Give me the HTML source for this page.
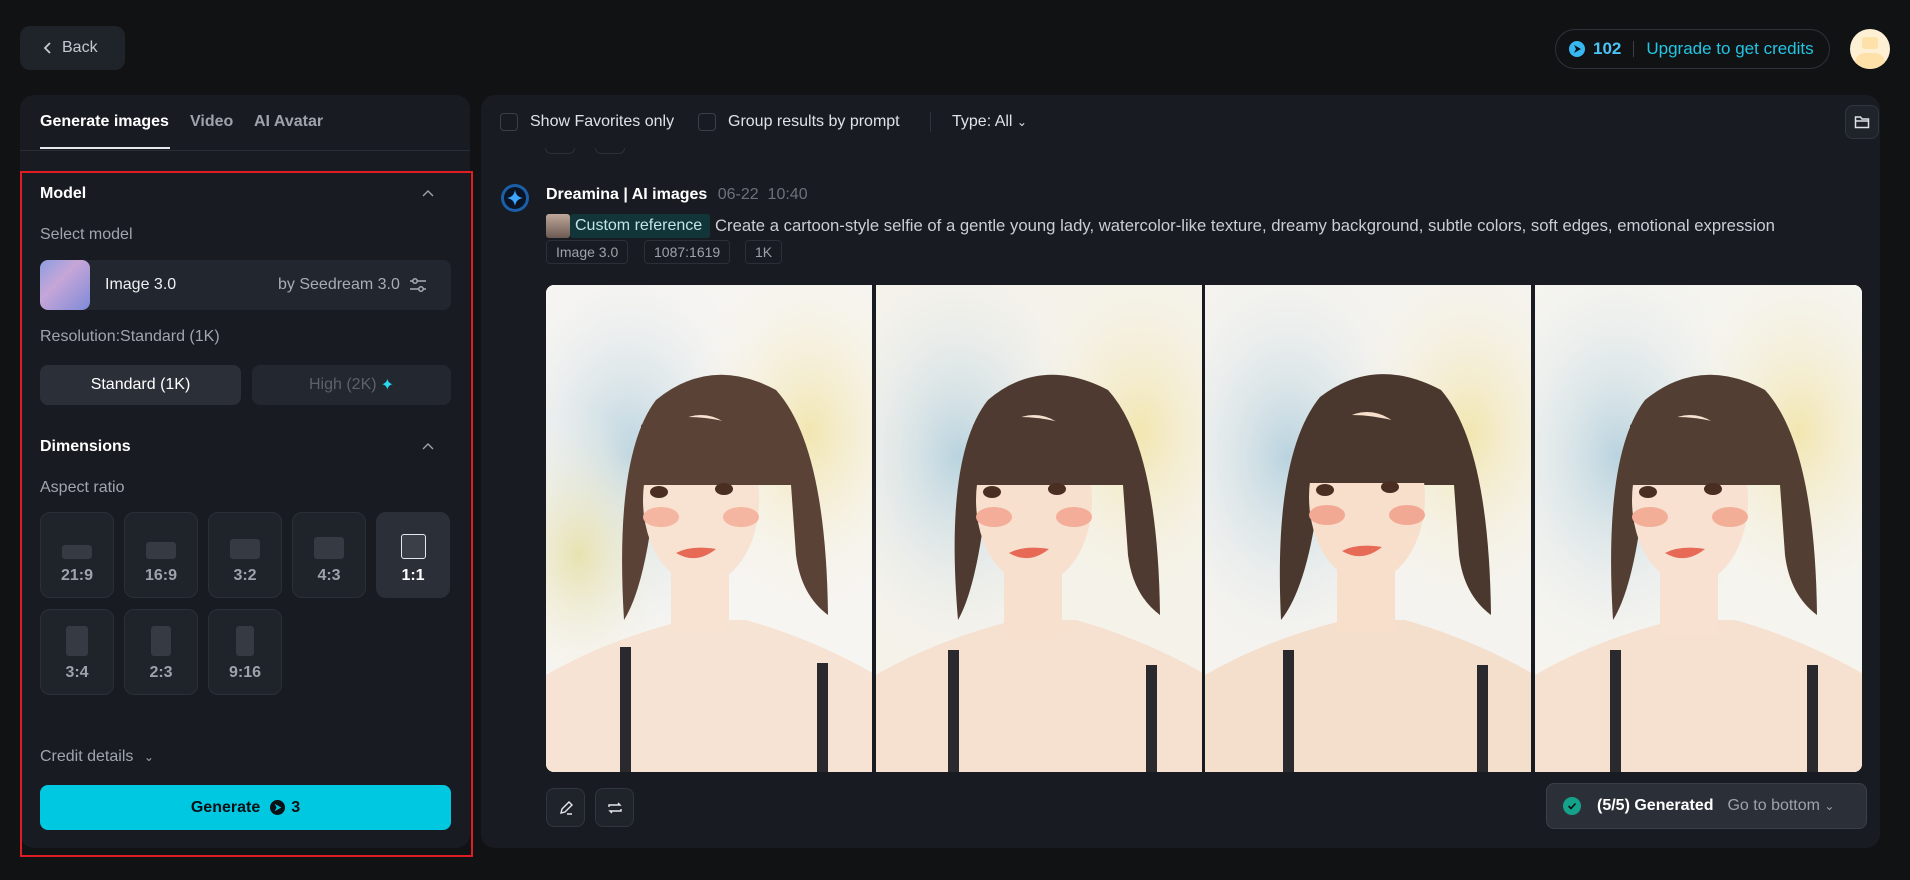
<!DOCTYPE html>
<html><head><meta charset="utf-8"><style>
*{box-sizing:border-box;margin:0;padding:0}
body{width:1910px;height:880px;background:#111214;font-family:"Liberation Sans",sans-serif;position:relative;overflow:hidden;color:#e6e8eb}
.a{position:absolute}
.back{left:20px;top:26px;width:105px;height:44px;border-radius:10px;background:#1f232a;color:#c5c9d0;font-size:16px;display:flex;align-items:center;padding-left:22px}
.lp{left:20px;top:95px;width:450px;height:753px;background:#181b22;border-radius:14px}
.rp{left:481px;top:95px;width:1399px;height:753px;background:#181b22;border-radius:14px}
.red{left:20px;top:171px;width:453px;height:686px;border:2px solid #e01c24}
.t{font-size:16px;white-space:nowrap}
.lbl{color:#a0a5ad;font-size:16px}
.btn{border-radius:8px;background:#2b2f37;display:flex;align-items:center;justify-content:center;font-size:16px}
.tile{width:74px;height:86px;border-radius:10px;background:#1f232a;border:1px solid #2b3038;display:flex;flex-direction:column;align-items:center;justify-content:flex-end;padding-bottom:12px;color:#9ea3ab;font-weight:bold;font-size:16px}
.tile i{display:block;background:#353a43;border-radius:3px;margin-bottom:8px}
.cb{width:18px;height:18px;border:1px solid #3a3f48;border-radius:4px}
.tag{height:24px;border:1px solid #2b3038;border-radius:4px;color:#9ea3ab;font-size:14px;padding:0 9px;display:flex;align-items:center}
.img{top:285px;height:487px;overflow:hidden;background:#f7f5f2}
.sb{width:39px;height:39px;border:1px solid #30353e;border-radius:8px;background:#1f232a;display:flex;align-items:center;justify-content:center}
</style></head><body>
<div class="a back"><svg width="12" height="14" viewBox="0 0 12 14"><path d="M8 2L3 7l5 5" stroke="#c5c9d0" stroke-width="1.8" fill="none"/></svg><span style="margin-left:8px">Back</span></div>

<div class="a" style="left:1555px;top:29px;width:275px;height:40px;border:1px solid #2e323a;border-radius:20px;display:flex;align-items:center;padding-left:13px">
<svg width="16" height="16" viewBox="0 0 16 16"><circle cx="8" cy="8" r="8" fill="#38b8f2"/><path d="M5 4l7 4-7 4 2-4z" fill="#111"/></svg>
<span style="color:#4cc3f5;font-size:17px;font-weight:bold;margin-left:8px">102</span>
<span style="width:1px;height:16px;background:#3a3f48;margin:0 12px"></span>
<span style="color:#23c4e4;font-size:17px">Upgrade to get credits</span></div>
<div class="a" style="left:1850px;top:29px;width:40px;height:40px;border-radius:50%;background:#fef0d4;overflow:hidden"><div class="a" style="left:12px;top:8px;width:16px;height:12px;background:#fde1a8;border-radius:3px"></div><div class="a" style="left:5px;top:24px;width:30px;height:20px;background:#fde1a8;border-radius:10px 10px 0 0"></div></div>

<div class="a lp"></div>
<div class="a t" style="left:40px;top:113px;font-weight:bold;color:#fff">Generate images</div>
<div class="a" style="left:40px;top:147px;width:130px;height:2px;background:#e6e8eb"></div>
<div class="a t" style="left:190px;top:113px;font-weight:bold;color:#9ea3ab">Video</div>
<div class="a t" style="left:254px;top:113px;font-weight:bold;color:#9ea3ab">AI Avatar</div>
<div class="a" style="left:20px;top:150px;width:450px;height:1px;background:#2a2e36"></div>

<div class="a t" style="left:40px;top:185px;font-weight:bold;color:#fff">Model</div>
<svg class="a" style="left:422px;top:189px" width="12" height="8" viewBox="0 0 12 8"><path d="M1 7l5-5 5 5" stroke="#9ea3ab" stroke-width="1.4" fill="none"/></svg>
<div class="a lbl" style="left:40px;top:226px">Select model</div>
<div class="a" style="left:40px;top:260px;width:411px;height:50px;border-radius:8px;background:#22262e"></div>
<div class="a" style="left:40px;top:260px;width:50px;height:50px;border-radius:8px;background:linear-gradient(135deg,#8c9ee0,#c6a6d8 40%,#7e8ad8)"></div>
<div class="a t" style="left:105px;top:276px;color:#eef0f2">Image 3.0</div>
<div class="a t" style="left:278px;top:276px;color:#a8adb5">by Seedream 3.0</div>
<svg class="a" style="left:409px;top:276px" width="18" height="18" viewBox="0 0 18 18" fill="none" stroke="#a8adb5" stroke-width="1.5"><path d="M1 5h16M1 13h16"/><circle cx="6" cy="5" r="2.2" fill="#22262e"/><circle cx="12" cy="13" r="2.2" fill="#22262e"/></svg>
<div class="a lbl" style="left:40px;top:328px">Resolution:Standard (1K)</div>
<div class="a btn" style="left:40px;top:365px;width:201px;height:40px;color:#fff">Standard (1K)</div>
<div class="a btn" style="left:252px;top:365px;width:199px;height:40px;background:#23272f;color:#5c616a">High (2K) <span style="color:#2ad6f0;margin-left:4px">✦</span></div>

<div class="a t" style="left:40px;top:438px;font-weight:bold;color:#fff">Dimensions</div>
<svg class="a" style="left:422px;top:442px" width="12" height="8" viewBox="0 0 12 8"><path d="M1 7l5-5 5 5" stroke="#9ea3ab" stroke-width="1.4" fill="none"/></svg>
<div class="a lbl" style="left:40px;top:479px">Aspect ratio</div>
<div class="a tile" style="left:40px;top:512px"><i style="width:30px;height:14px"></i>21:9</div>
<div class="a tile" style="left:124px;top:512px"><i style="width:30px;height:17px"></i>16:9</div>
<div class="a tile" style="left:208px;top:512px"><i style="width:30px;height:20px"></i>3:2</div>
<div class="a tile" style="left:292px;top:512px"><i style="width:30px;height:22px"></i>4:3</div>
<div class="a tile" style="left:376px;top:512px;background:#2b2f37;color:#fff"><i style="width:25px;height:25px;border:1.5px solid #e6e8eb;background:#3a3f48"></i>1:1</div>
<div class="a tile" style="left:40px;top:609px"><i style="width:22px;height:30px"></i>3:4</div>
<div class="a tile" style="left:124px;top:609px"><i style="width:20px;height:30px"></i>2:3</div>
<div class="a tile" style="left:208px;top:609px"><i style="width:18px;height:30px"></i>9:16</div>
<div class="a lbl" style="left:40px;top:748px">Credit details <span style="font-size:12px;margin-left:6px">⌄</span></div>
<div class="a" style="left:40px;top:785px;width:411px;height:45px;border-radius:8px;background:#00c8e0;display:flex;align-items:center;justify-content:center;color:#0c0f14;font-weight:bold;font-size:16px">Generate <svg style="margin:0 6px 0 10px" width="15" height="15" viewBox="0 0 16 16"><circle cx="8" cy="8" r="8" fill="#0c0f14"/><path d="M5 4l7 4-7 4 2-4z" fill="#00c8e0"/></svg>3</div>
<div class="a red"></div>

<div class="a rp"></div>
<div class="a cb" style="left:500px;top:113px"></div>
<div class="a t" style="left:530px;top:113px;color:#dfe2e6">Show Favorites only</div>
<div class="a cb" style="left:698px;top:113px"></div>
<div class="a t" style="left:728px;top:113px;color:#dfe2e6">Group results by prompt</div>
<div class="a" style="left:930px;top:112px;width:1px;height:20px;background:#2e323a"></div>
<div class="a t" style="left:952px;top:113px;color:#dfe2e6">Type: All <span style="font-size:12px">⌄</span></div>
<div class="a sb" style="left:1845px;top:105px;width:34px;height:34px"><svg width="16" height="14" viewBox="0 0 16 14" fill="none" stroke="#dfe2e6" stroke-width="1.5"><path d="M1.5 2h5l1.5 2h6.5v8.5h-13z M1.5 6h13"/></svg></div>
<div class="a" style="left:545px;top:148px;width:30px;height:6px;border:1px solid #2b3038;border-top:none;border-radius:0 0 6px 6px"></div>
<div class="a" style="left:595px;top:148px;width:30px;height:6px;border:1px solid #2b3038;border-top:none;border-radius:0 0 6px 6px"></div>

<svg class="a" style="left:500px;top:183px" width="30" height="30" viewBox="0 0 30 30"><circle cx="15" cy="15" r="14" fill="#1a5fa8"/><circle cx="15" cy="15" r="11" fill="#0b1424"/><path d="M15 7c1 5 3 7 8 8-5 1-7 3-8 8-1-5-3-7-8-8 5-1 7-3 8-8z" fill="#3fa6ff"/></svg>
<div class="a t" style="left:546px;top:186px;font-weight:bold;color:#fff">Dreamina | AI images <span style="font-weight:normal;color:#6c717a;margin-left:6px">06-22&nbsp; 10:40</span></div>
<div class="a" style="left:546px;top:214px;width:24px;height:24px;border-radius:3px;background:linear-gradient(#bfa89a,#6c5a52)"></div>
<div class="a" style="left:570px;top:214px;width:140px;height:24px;background:#12353a;border-radius:3px"></div>
<div class="a t" style="left:575px;top:217px;color:#bfe5ea">Custom reference</div>
<div class="a t" style="left:715px;top:216px;color:#c9ced4;font-size:16.7px">Create a cartoon-style selfie of a gentle young lady, watercolor-like texture, dreamy background, subtle colors, soft edges, emotional expression</div>
<div class="a tag" style="left:546px;top:240px">Image 3.0</div>
<div class="a tag" style="left:644px;top:240px">1087:1619</div>
<div class="a tag" style="left:745px;top:240px">1K</div>

<svg width="0" height="0" style="position:absolute"><defs>
<radialGradient id="b1" cx=".25" cy=".35" r=".45"><stop offset="0" stop-color="#b9d3df"/><stop offset="1" stop-color="#f7f5f2" stop-opacity="0"/></radialGradient>
<radialGradient id="b2" cx=".8" cy=".3" r=".4"><stop offset="0" stop-color="#f2e6b0"/><stop offset="1" stop-color="#f7f5f2" stop-opacity="0"/></radialGradient>
<radialGradient id="b3" cx=".1" cy=".55" r=".3"><stop offset="0" stop-color="#e8e2b0"/><stop offset="1" stop-color="#f7f5f2" stop-opacity="0"/></radialGradient></defs></svg>

<div class="a img" style="left:546px;width:326px;border-radius:8px 0 0 8px">
<svg width="330" height="490" viewBox="0 0 330 490">
<rect width="330" height="490" fill="#f7f5f2"/><rect width="330" height="490" fill="url(#b1)"/><rect width="330" height="490" fill="url(#b2)"/><rect width="330" height="490" fill="url(#b3)"/>
<path d="M0 390 Q60 355 140 335 L200 335 Q270 355 330 390 L330 490 L0 490z" fill="#f6e3d4"/>
<path d="M78 335 Q68 170 110 115 Q165 70 230 105 Q280 160 282 330 Q255 310 250 270 L245 200 L110 200 Q100 300 78 335z" fill="#5a4236"/>
<ellipse cx="155" cy="215" rx="58" ry="85" fill="#f8e2d2"/>
<rect x="125" y="270" width="58" height="80" fill="#f8e2d2"/>
<path d="M95 140 Q150 120 220 150 L240 200 L95 200z" fill="#5a4236"/>
<ellipse cx="115" cy="232" rx="18" ry="10" fill="#f4b6a0"/><ellipse cx="195" cy="232" rx="18" ry="10" fill="#f4b6a0"/>
<ellipse cx="113" cy="207" rx="9" ry="6" fill="#4a2e22"/><ellipse cx="178" cy="204" rx="9" ry="6" fill="#4a2e22"/>
<path d="M130 268 Q145 260 170 264 Q150 280 130 268z" fill="#e66a56"/>
<rect x="74" y="362" width="11" height="128" fill="#2a2a2e"/><rect x="271" y="378" width="11" height="112" fill="#2a2a2e"/>
</svg></div>
<div class="a img" style="left:876px;width:326px">
<svg width="330" height="490" viewBox="0 0 330 490"><rect width="330" height="490" fill="#f5f2ea"/><rect width="330" height="490" fill="url(#b1)"/><rect width="330" height="490" fill="url(#b2)"/>
<path d="M0 390 Q60 355 140 335 L200 335 Q270 355 330 390 L330 490 L0 490z" fill="#f6e0cf"/>
<path d="M82 335 Q68 170 112 115 Q165 70 232 105 Q282 160 284 330 Q257 310 252 270 L247 200 L112 200 Q102 300 82 335z" fill="#4e3a30"/>
<ellipse cx="158" cy="215" rx="58" ry="85" fill="#f8e0cf"/><rect x="128" y="270" width="58" height="80" fill="#f8e0cf"/>
<path d="M97 140 Q152 120 222 150 L242 200 L97 200z" fill="#4e3a30"/>
<ellipse cx="118" cy="232" rx="18" ry="10" fill="#f3ad98"/><ellipse cx="198" cy="232" rx="18" ry="10" fill="#f3ad98"/>
<ellipse cx="116" cy="207" rx="9" ry="6" fill="#4a2e22"/><ellipse cx="181" cy="204" rx="9" ry="6" fill="#4a2e22"/>
<path d="M133 268 Q148 260 173 264 Q153 280 133 268z" fill="#e66a56"/>
<rect x="72" y="365" width="11" height="125" fill="#2a2a2e"/><rect x="270" y="380" width="11" height="110" fill="#2a2a2e"/></svg></div>
<div class="a img" style="left:1205px;width:326px">
<svg width="330" height="490" viewBox="0 0 330 490"><rect width="330" height="490" fill="#f5f3ef"/><rect width="330" height="490" fill="url(#b1)"/><rect width="330" height="490" fill="url(#b2)"/>
<path d="M0 390 Q60 355 140 335 L200 335 Q270 355 330 390 L330 490 L0 490z" fill="#f4dfcc"/>
<path d="M76 335 Q68 170 115 112 Q170 70 236 105 Q284 160 286 330 Q259 310 254 270 L249 200 L115 200 Q104 300 76 335z" fill="#4a382e"/>
<ellipse cx="162" cy="212" rx="58" ry="85" fill="#f7dfcc"/><rect x="132" y="268" width="58" height="80" fill="#f7dfcc"/>
<path d="M100 138 Q155 118 225 148 L245 198 L100 198z" fill="#4a382e"/>
<ellipse cx="122" cy="230" rx="18" ry="10" fill="#f1a994"/><ellipse cx="202" cy="230" rx="18" ry="10" fill="#f1a994"/>
<ellipse cx="120" cy="205" rx="9" ry="6" fill="#4a2e22"/><ellipse cx="185" cy="202" rx="9" ry="6" fill="#4a2e22"/>
<path d="M137 266 Q152 258 177 262 Q157 278 137 266z" fill="#e66a56"/>
<rect x="78" y="365" width="11" height="125" fill="#2a2a2e"/><rect x="272" y="380" width="11" height="110" fill="#2a2a2e"/></svg></div>
<div class="a img" style="left:1535px;width:327px;border-radius:0 8px 8px 0">
<svg width="330" height="490" viewBox="0 0 330 490"><rect width="330" height="490" fill="#f5f4ef"/><rect width="330" height="490" fill="url(#b1)"/><rect width="330" height="490" fill="url(#b2)"/>
<path d="M0 390 Q60 355 140 335 L200 335 Q270 355 330 390 L330 490 L0 490z" fill="#f6e1d0"/>
<path d="M78 335 Q68 170 110 115 Q165 70 230 105 Q280 160 282 330 Q255 310 250 270 L245 200 L110 200 Q100 300 78 335z" fill="#523e32"/>
<ellipse cx="155" cy="215" rx="58" ry="85" fill="#f8e1d0"/><rect x="125" y="270" width="58" height="80" fill="#f8e1d0"/>
<path d="M95 140 Q150 120 220 150 L240 200 L95 200z" fill="#523e32"/>
<ellipse cx="115" cy="232" rx="18" ry="10" fill="#f3ae98"/><ellipse cx="195" cy="232" rx="18" ry="10" fill="#f3ae98"/>
<ellipse cx="113" cy="207" rx="9" ry="6" fill="#4a2e22"/><ellipse cx="178" cy="204" rx="9" ry="6" fill="#4a2e22"/>
<path d="M130 268 Q145 260 170 264 Q150 280 130 268z" fill="#e66a56"/>
<rect x="75" y="365" width="11" height="125" fill="#2a2a2e"/><rect x="272" y="380" width="11" height="110" fill="#2a2a2e"/></svg></div>

<div class="a sb" style="left:546px;top:788px"><svg width="16" height="16" viewBox="0 0 16 16" fill="none" stroke="#e6e8eb" stroke-width="1.4"><path d="M3 13l1-4 7-7 3 3-7 7z M9 14h5"/></svg></div>
<div class="a sb" style="left:595px;top:788px"><svg width="16" height="16" viewBox="0 0 16 16" fill="none" stroke="#e6e8eb" stroke-width="1.4"><path d="M2 7V5h11l-2-2 M14 9v2H3l2 2"/></svg></div>
<div class="a" style="left:1546px;top:783px;width:321px;height:46px;border:1px solid #3a3f48;border-radius:8px;background:#2b2f37;display:flex;align-items:center;padding-left:16px;font-size:16px">
<svg width="18" height="18" viewBox="0 0 18 18"><circle cx="9" cy="9" r="9" fill="#14a38a"/><path d="M5.5 9l2.5 2.5 4.5-5" stroke="#0c0f14" stroke-width="1.6" fill="none"/></svg>
<span style="font-weight:bold;color:#fff;margin-left:16px">(5/5) Generated</span><span style="color:#9ea3ab;margin-left:14px">Go to bottom <span style="font-size:12px">⌄</span></span></div>
</body></html>
